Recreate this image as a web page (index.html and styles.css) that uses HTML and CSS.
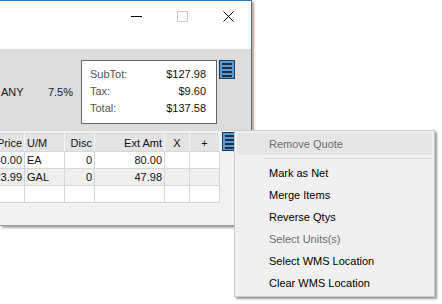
FILE: index.html
```html
<!DOCTYPE html>
<html lang="en">
<head>
  <meta charset="UTF-8">
  <title>Quote</title>
  <link rel="stylesheet" href="styles.css">
</head>
<body>
  <div class="window">
    <div class="titlebar">
      <div class="caption-btn"><span class="min-line"></span></div>
      <div class="caption-btn"><span class="max-box"></span></div>
      <div class="caption-btn">
        <svg width="11" height="11" viewBox="0 0 11 11"><path d="M0.5 0.5 L10.5 10.5 M10.5 0.5 L0.5 10.5" stroke="#000" stroke-width="1"/></svg>
      </div>
    </div>

    <div class="summary">
      <div class="tax">
        <span>ANY</span>
        <span>7.5%</span>
      </div>
      <div class="totals">
        <div class="total-row"><span class="label">SubTot:</span><span class="value">$127.98</span></div>
        <div class="total-row"><span class="label">Tax:</span><span class="value">$9.60</span></div>
        <div class="total-row"><span class="label">Total:</span><span class="value">$137.58</span></div>
      </div>
      <div class="menu-btn">
        <svg width="16" height="19" viewBox="0 0 16 19"><rect x="0.5" y="0.5" width="15" height="18" fill="#5b9bd5" stroke="#1f3b57"/><rect x="3" y="3" width="10" height="2" fill="#1f2f3f"/><rect x="3" y="7" width="10" height="2" fill="#1f2f3f"/><rect x="3" y="11" width="10" height="2" fill="#1f2f3f"/><rect x="3" y="15" width="10" height="2" fill="#1f2f3f"/></svg>
      </div>
    </div>

    <div class="lines">
      <table class="grid">
        <tr class="head">
          <td class="c-price num">Price</td>
          <td class="c-um">U/M</td>
          <td class="c-disc num">Disc</td>
          <td class="c-ext num">Ext Amt</td>
          <td class="c-x mid">X</td>
          <td class="c-add mid">+</td>
        </tr>
        <tr>
          <td class="num">40.00</td>
          <td>EA</td>
          <td class="num">0</td>
          <td class="num">80.00</td>
          <td></td>
          <td></td>
        </tr>
        <tr class="alt">
          <td class="num">23.99</td>
          <td>GAL</td>
          <td class="num">0</td>
          <td class="num">47.98</td>
          <td></td>
          <td></td>
        </tr>
        <tr>
          <td></td><td></td><td></td><td></td><td></td><td></td>
        </tr>
      </table>
      <div class="menu-btn grid-btn">
        <svg width="16" height="19" viewBox="0 0 16 19"><rect x="0.5" y="0.5" width="15" height="18" fill="#5b9bd5" stroke="#1f3b57"/><rect x="3" y="3" width="10" height="2" fill="#1f2f3f"/><rect x="3" y="7" width="10" height="2" fill="#1f2f3f"/><rect x="3" y="11" width="10" height="2" fill="#1f2f3f"/><rect x="3" y="15" width="10" height="2" fill="#1f2f3f"/></svg>
      </div>
    </div>
  </div>

  <div class="context-menu">
    <div class="item disabled hover">Remove Quote</div>
    <div class="separator"></div>
    <div class="item">Mark as Net</div>
    <div class="item">Merge Items</div>
    <div class="item">Reverse Qtys</div>
    <div class="item disabled">Select Units(s)</div>
    <div class="item">Select WMS Location</div>
    <div class="item">Clear WMS Location</div>
  </div>
</body>
</html>
```

FILE: styles.css
```css
body {
  margin: 0;
  width: 442px;
  height: 304px;
  overflow: hidden;
  position: relative;
  background: #fff;
  font-family: "Liberation Sans", Arial, sans-serif;
  font-size: 11px;
  color: #111;
}

.window {
  position: absolute;
  left: 0;
  top: 0;
  width: 251px;
  height: 224px;
  border-top: 1px solid #2b7bc4;
  border-right: 1px solid #2b7bc4;
  border-bottom: 1px solid #9a9a9a;
  box-shadow: 2px 2px 2px rgba(0, 0, 0, 0.35);
  overflow: hidden;
  background: #f2f2f2;
}

.titlebar {
  height: 48px;
  background: #fff;
  display: flex;
  justify-content: flex-end;
  align-items: flex-start;
}
.caption-btn {
  width: 46px;
  height: 30px;
  display: flex;
  align-items: center;
  justify-content: center;
}
.min-line {
  display: block;
  width: 11px;
  height: 1px;
  background: #000;
}
.max-box {
  display: block;
  width: 9px;
  height: 9px;
  border: 1px solid #c8c8c8;
}

.summary {
  height: 71px;
  padding-top: 11px;
  background: #dcdcdc;
  display: flex;
  align-items: flex-start;
}
.tax {
  width: 72px;
  height: 64px;
  padding: 0 8px 0 1px;
  display: flex;
  align-items: center;
  justify-content: space-between;
  color: #1a1a1a;
}
.totals {
  width: 116px;
  height: 51px;
  padding: 5px 10px 6px 8px;
  border: 1px solid #646464;
  background: #fff;
}
.total-row {
  height: 17px;
  line-height: 17px;
  display: flex;
  justify-content: space-between;
}
.label {
  color: #555;
}
.value {
  color: #111;
}
.menu-btn {
  width: 16px;
  height: 19px;
  margin-left: 2px;
}
.menu-btn svg {
  display: block;
}

.lines {
  display: flex;
  align-items: flex-start;
  padding-top: 2px;
}
.grid {
  border-collapse: collapse;
  margin-left: -27px;
  table-layout: fixed;
}
.grid td {
  height: 16px;
  padding: 0 2px;
  border: 1px solid #d6d6d6;
  background: #fff;
  line-height: 16px;
  white-space: nowrap;
  overflow: hidden;
  color: #111;
}
.grid .head td {
  height: 17px;
  background: #e3e3e3;
  border-color: #d6d6d6 #f4f4f4 #d6d6d6 #f4f4f4;
}
.grid .alt td {
  background: #efefef;
}
.num {
  text-align: right;
}
.mid {
  text-align: center;
}
.c-price { width: 46px; }
.c-um { width: 35px; }
.c-disc { width: 25px; }
.c-ext { width: 65px; }
.c-x { width: 20px; }
.c-add { width: 25px; }
.grid-btn {
  margin-left: 2px;
  margin-top: -1px;
}

.context-menu {
  position: absolute;
  left: 234px;
  top: 130px;
  width: 195px;
  padding: 2px;
  border: 1px solid #cccccc;
  background: #f0f0f0;
  box-shadow: 2px 2px 2px rgba(0, 0, 0, 0.4);
  font-size: 11px;
}
.item {
  height: 22px;
  line-height: 22px;
  padding-left: 32px;
  color: #000;
}
.item.disabled {
  color: #6d6d6d;
}
.item.hover {
  background: #e5e5e5;
}
.separator {
  height: 1px;
  margin: 3px 0 3px 27px;
  background: #d7d7d7;
}
```
